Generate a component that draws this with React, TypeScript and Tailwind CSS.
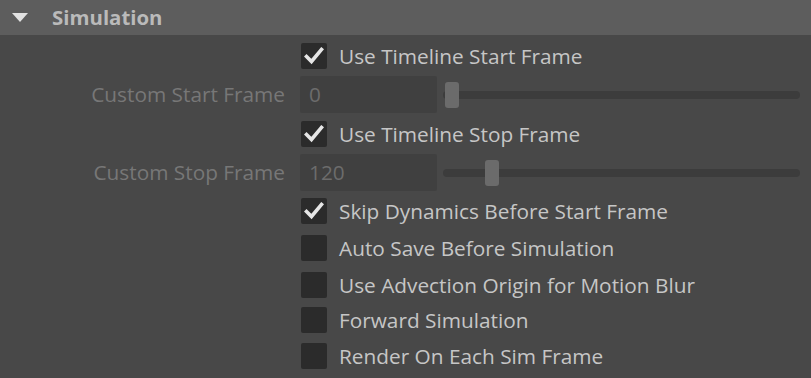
import React from "react";

const font = { fontFamily: '"Open Sans", "Noto Sans", sans-serif' };

function Check({ checked }: { checked?: boolean }) {
  return (
    <div className="w-[26px] h-[26px] rounded-[2px] bg-[#2b2b2b] flex items-center justify-center shrink-0">
      {checked && (
        <svg width="20" height="18" viewBox="0 0 20 18">
          <path d="M2.5 9.5 L7.5 14.5 L17.5 2.5" fill="none" stroke="#e6e6e6" strokeWidth="3.6" strokeLinecap="square" />
        </svg>
      )}
    </div>
  );
}

function CheckRow({ label, checked, className }: { label: string; checked?: boolean; className?: string }) {
  return (
    <div className={"flex items-center h-[26px] " + (className ?? "")}>
      <div className="w-[301px] shrink-0" />
      <Check checked={checked} />
      <span className="ml-[12px] text-[20.8px] text-[#c6c6c6] leading-none whitespace-nowrap">{label}</span>
    </div>
  );
}

function SliderRow({ label, value, thumb, className }: { label: string; value: string; thumb: number; className?: string }) {
  return (
    <div className={"flex items-center h-[37px] " + (className ?? "")}>
      <div className="w-[285px] shrink-0 text-right text-[20.8px] text-[#777777] leading-none whitespace-nowrap">{label}</div>
      <div className="ml-[15px] w-[137px] h-[37px] rounded-[2px] bg-[#404040] flex items-center pl-[9px] text-[20.8px] text-[#6c6c6c] shrink-0">
        {value}
      </div>
      <div className="relative ml-[6px] w-[357px] h-[8px] rounded-full bg-[#3c3c3c]">
        <div
          className="absolute top-[-9px] w-[14px] h-[26px] rounded-[3px] bg-[#6b6b6b]"
          style={{ left: thumb }}
        />
      </div>
    </div>
  );
}

export default function App() {
  return (
    <div className="w-[811px] h-[378px] bg-[#484848] overflow-hidden" style={font}>
      <div className="h-[35px] bg-[#5d5d5d] flex items-center">
        <svg className="ml-[12px]" width="16" height="9" viewBox="0 0 16 9">
          <path d="M0 0 L16 0 L8 9 Z" fill="#e2e2e2" />
        </svg>
        <span className="ml-[24px] text-[20.4px] font-bold text-[#bababa] leading-none">Simulation</span>
      </div>
      <div className="flex flex-col pt-[8px]">
        <CheckRow label="Use Timeline Start Frame" checked />
        <SliderRow label="Custom Start Frame" value="0" thumb={2} className="mt-[7px]" />
        <CheckRow label="Use Timeline Stop Frame" checked className="mt-[8px]" />
        <SliderRow label="Custom Stop Frame" value="120" thumb={42} className="mt-[7px]" />
        <CheckRow label="Skip Dynamics Before Start Frame" checked className="mt-[7px]" />
        <CheckRow label="Auto Save Before Simulation" className="mt-[11px]" />
        <CheckRow label="Use Advection Origin for Motion Blur" className="mt-[11px]" />
        <CheckRow label="Forward Simulation" className="mt-[9px]" />
        <CheckRow label="Render On Each Sim Frame" className="mt-[10px]" />
      </div>
    </div>
  );
}
